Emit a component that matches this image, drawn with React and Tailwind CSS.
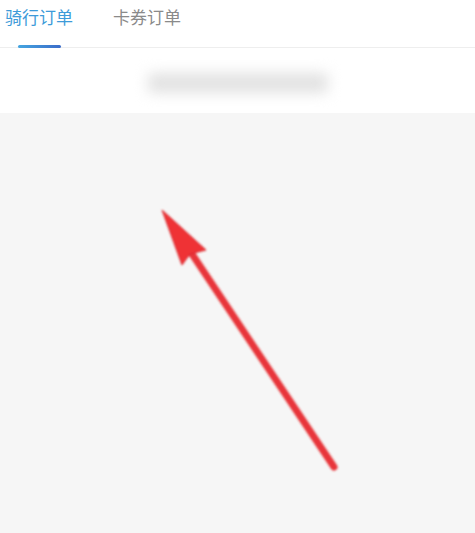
import React from 'react';

const Arrow = () => (
  <svg className="absolute left-0 top-0" width="475" height="533" viewBox="0 0 475 533">
    <defs>
      <filter id="sh" x="-20%" y="-20%" width="140%" height="140%">
        <feGaussianBlur stdDeviation="0.8" />
      </filter>
    </defs>
    <g filter="url(#sh)">
      <line x1="334" y1="467" x2="188" y2="248" stroke="#e8363a" strokeWidth="7" strokeLinecap="round" />
      <polygon points="162,210 206,250 190,254 182,265" fill="#ef3035" stroke="#d92a2f" strokeWidth="1" strokeLinejoin="round" />
    </g>
  </svg>
);

export default function App() {
  return (
    <div className="w-[475px] h-[533px] bg-[#f6f6f6] flex flex-col overflow-hidden relative" style={{ fontFamily: '"Noto Sans CJK SC", "Noto Sans", sans-serif' }}>
      <div className="bg-white h-[48px] border-b border-[#eeeeee] flex items-start">
        <div className="flex flex-col items-center ml-[5px]">
          <span className="text-[17px] leading-[34px] text-[#3d9bd9]">骑行订单</span>
          <div className="mt-[11px] w-[43px] h-[3px] rounded-full bg-gradient-to-r from-[#45a5e0] to-[#3b6cc9]" />
        </div>
        <span className="ml-[40px] text-[17px] leading-[34px] text-[#8a8a8a]">卡券订单</span>
      </div>
      <div className="bg-white h-[65px] flex items-center justify-center">
        <div className="w-[180px] h-[20px] mt-[4px] rounded-sm bg-[#e2e2e2] blur-[7px]" />
      </div>
      <div className="flex-1" />
      <Arrow />
    </div>
  );
}
